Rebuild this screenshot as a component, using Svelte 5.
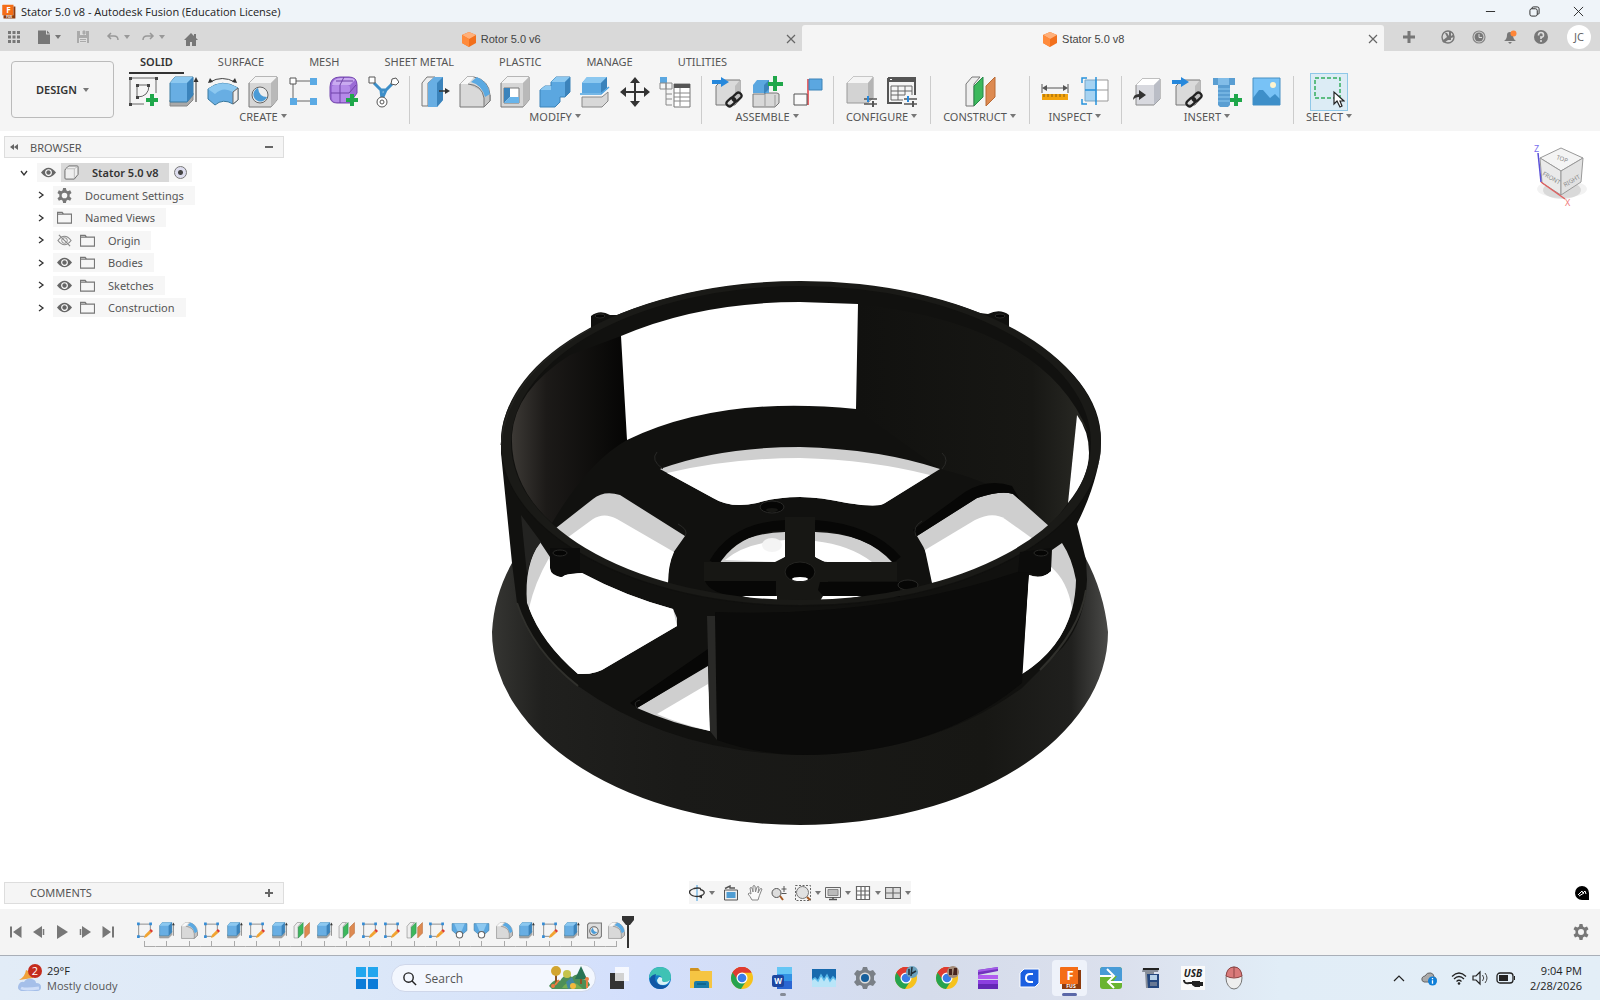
<script lang="ts">
  // Modelling workspace: window chrome, ribbon, browser tree, viewport,
  // timeline and the desktop taskbar underneath.

  type Group = { label: string; tools: string[] }
  type TreeRow = { label: string; icon: string; eye?: 'eye' | 'hidden' }

  const ribbonTabs = ['SOLID', 'SURFACE', 'MESH', 'SHEET METAL', 'PLASTIC', 'MANAGE', 'UTILITIES']

  const groups: Group[] = [
    { label: 'CREATE', tools: ['sketch', 'extrude', 'revolve', 'hole', 'pattern', 'form', 'automate'] },
    { label: 'MODIFY', tools: ['presspull', 'fillet', 'shell', 'combine', 'split', 'move', 'parameters'] },
    { label: 'ASSEMBLE', tools: ['link', 'component', 'joint'] },
    { label: 'CONFIGURE', tools: ['configure', 'configTable'] },
    { label: 'CONSTRUCT', tools: ['plane'] },
    { label: 'INSPECT', tools: ['measure', 'section'] },
    { label: 'INSERT', tools: ['derive', 'link', 'bolt', 'canvas'] },
    { label: 'SELECT', tools: ['select'] },
  ]

  const tree: TreeRow[] = [
    { label: 'Document Settings', icon: 'gear' },
    { label: 'Named Views', icon: 'folder' },
    { label: 'Origin', icon: 'folder', eye: 'hidden' },
    { label: 'Bodies', icon: 'folder', eye: 'eye' },
    { label: 'Sketches', icon: 'folder', eye: 'eye' },
    { label: 'Construction', icon: 'folder', eye: 'eye' },
  ]

  const navTools = [
    { name: 'orbit', menu: true },
    { name: 'lookAt', menu: false },
    { name: 'pan', menu: false },
    { name: 'zoom', menu: false },
    { name: 'fit', menu: true },
    { name: 'display', menu: true },
    { name: 'grid', menu: true },
    { name: 'viewports', menu: true },
  ]

  const playback = ['first', 'back', 'play', 'forward', 'last']

  const features = [
    'edit', 'extrude', 'fillet', 'edit', 'extrude', 'edit', 'extrude', 'plane', 'extrude', 'plane', 'edit',
    'edit', 'plane', 'edit', 'loft', 'loft', 'fillet', 'extrude', 'edit', 'extrude', 'bore', 'fillet',
  ]

  const apps = [
    'edge', 'explorer', 'chrome', 'word', 'monitor', 'settings', 'chromeBlue', 'chromeBrown',
    'clip', 'cura', 'fusion', 'camtasia', 'scanner', 'usb', 'mouse',
  ]

  let activeTab = $state('SOLID')

  const plus = '<path d="M25 18v12M19 24h12" stroke="#1fa74a" stroke-width="4"/>'
  const cube =
    '<path d="M2 7 8 1h22v23l-6 7H2z" fill="#d6d6d6" stroke="#777"/><path d="M2 7 8 1h22l-6 6z" fill="#f3f3f3"/><path d="M24 7l6-6v23l-6 7z" fill="#b9b9b9"/>'
  const chain =
    '<g fill="none" stroke="#222" stroke-width="2.2"><rect x="15" y="23" width="10" height="6" rx="3" transform="rotate(-42 20 26)"/><rect x="21" y="18" width="10" height="6" rx="3" transform="rotate(-42 26 21)"/></g>'
  const sliders =
    '<path d="M18 23h13M18 28h13" stroke="#555" stroke-width="1.6"/><path d="M22 20v6" stroke="#2688dc" stroke-width="2"/><path d="M27 25v6" stroke="#555" stroke-width="2"/>'
  const chromeBody =
    '<circle cx="12" cy="12" r="11" fill="#f6c21c"/><path d="M12 12 2.500 6.500A11 11 0 0 1 21.500 6.500H12z" fill="#df3b31"/><path d="M2.500 6.500A11 11 0 0 0 11 23l5.500-8.500L12 12z" fill="#26a34f"/><path d="M2.500 6.500A11 11 0 0 1 21.500 6.500H12L8 14z" fill="#df3b31"/><circle cx="12" cy="12" r="5.500" fill="#fff"/><circle cx="12" cy="12" r="4.300" fill="#3a7de8"/>'

  // 32-unit drawings, shared by the ribbon and the timeline.
  const tools: Record<string, string> = {
    sketch: `<path d="M3 2h26v15M3 2v26h14M10 9h12M10 9v12M22 9q0 12-12 12" fill="none" stroke="#666"/><g fill="#444"><path d="M2 1h3v3H2zM28 1h3v3h-3zM2 27h3v3H2zM9 8h3v3H9zM20 8h3v3h-3zM9 20h3v3H9z"/></g>${plus}`,
    extrude:
      '<path d="M3 24h17l6-7v7l-6 6H3z" fill="#a9a9a9" stroke="#888"/><path d="M3 7 8 1h18v18l-6 7H3z" fill="#68aee3" stroke="#39799f"/><path d="M3 7 8 1h18l-6 6z" fill="#8cc8f0"/><path d="M20 7l6-6v18l-6 7z" fill="#3b83bb"/><path d="M29 26V4" stroke="#333"/><path d="M26.500 6 29 1l2.500 5z" fill="#333"/>',
    revolve:
      '<path d="M3 6Q15-1 28 6" fill="none" stroke="#444"/><path d="M1 7l2-5 3 4zM30 7l-2-5-3 4z" fill="#333"/><path d="M1 13Q15 2 31 12v12l-5 4q-10-6-18 1L1 23z" fill="#68aee3" stroke="#39799f"/><path d="M1 13Q15 2 31 12l-5 4Q16 10 8 18z" fill="#8cc8f0"/><path d="M26 16l5-4v12l-5 4z" fill="#eee" stroke="#666"/>',
    hole: `${cube}<circle cx="13" cy="19" r="8" fill="#eee" stroke="#666"/><path d="M11 12a7 7 0 1 0 9 9q-8 0-9-9z" fill="#4b9bd6"/>`,
    bore: '<path d="M3 5l3-3h23v25l-3 3H3z" fill="#ddd" stroke="#777" stroke-width="2"/><circle cx="15" cy="17" r="8" fill="#eee" stroke="#666" stroke-width="2"/><path d="M13 11a6 6 0 1 0 8 8q-7 0-8-8z" fill="#4b9bd6"/>',
    pattern:
      '<path d="M9 5h14M6 8v14M9 25h14" stroke="#666"/><path d="M3 2h6v6H3z" fill="#fff" stroke="#555"/><path d="M23 2h7v7h-7zM3 22h7v7H3zM23 22h7v7h-7z" fill="#5baae4"/>',
    form: `<path d="M3 11Q3 1 13 1h9q8 0 8 8v8l-7 10H10q-7 0-7-7z" fill="#9b6bd6" stroke="#7548ae"/><path d="M5 9Q6 2 14 2h8q5 0 6 2l-5 5z" fill="#c9aaf0"/><path d="M5 11q0-2 3-2h12q3 0 3 3v11q0 3-3 3H9q-4 0-4-4z" fill="#b48ae8"/><path d="M4 17h18l7-8M13 9v18M9 5h17M17 1l-4 8" stroke="#6f43a6" fill="none"/>${plus}`,
    automate:
      '<path d="M7 7l7 7h5l6-6M14 14l1 9 4-9" fill="none" stroke="#3c8ec8" stroke-width="3"/><path d="M2 1h6v6H2z" fill="#fff" stroke="#555"/><path d="M24 8l1-5 4-1 3 4-3 3z" fill="#fff" stroke="#555"/><circle cx="15" cy="26" r="5" fill="#fff" stroke="#555"/><circle cx="15" cy="26" r="2" fill="none" stroke="#555"/>',
    presspull:
      '<path d="M3 7 8 1h8L9 7v23H3z" fill="#eee" stroke="#777"/><path d="M9 7l6-6h9v23l-6 7H9z" fill="#68aee3"/><path d="M18 7l6-6v23l-6 7z" fill="#3b83bb"/><path d="M20 15h7" stroke="#333" stroke-width="1.500"/><path d="M26 12l5 3-5 3z" fill="#333"/>',
    fillet:
      '<path d="M1 8 8 1h7q15 3 16 18v6l-6 6H1z" fill="#d9d9d9" stroke="#777"/><path d="M1 8 8 1h7L9 8z" fill="#f8f8f8"/><path d="M9 8q14 1 16 14v9l6-6v-6" fill="#c4c4c4" stroke="#777"/><path d="M12 6l6-5q11 5 13 17l-5 3Q23 9 12 6z" fill="#5aa9e2"/>',
    shell: `${cube}<path d="M5 12h15v15H5z" fill="#fff" stroke="#777"/><path d="M5 12h6v9l-6 6z" fill="#3b83bb"/><path d="M5 27l6-6h9v6z" fill="#68b4ea"/>`,
    combine:
      '<path d="M1 14l5-4h6V6l5-5h14v15l-5 5h-5v5l-5 5H1z" fill="#5ba7e0" stroke="#3c83b8"/><path d="M12 6l5-5h14l-5 5zM1 14l5-4h6v4z" fill="#8cc8f0"/><path d="M26 6l5-5v15l-5 5z" fill="#3b83bb"/>',
    split:
      '<path d="M3 7 8 1h20v11l-6 5H3z" fill="#5ba7e0"/><path d="M3 7 8 1h20l-6 6z" fill="#8cc8f0"/><path d="M22 7l6-6v11l-6 5z" fill="#3b83bb"/><path d="M1 18h21l8-7" fill="none" stroke="#4ba2e1" stroke-width="1.500"/><path d="M3 21h20l6-5v9l-6 6H3z" fill="#d8d8d8" stroke="#888"/>',
    move: '<path d="M16 4v24M4 16h24" stroke="#333" stroke-width="2"/><path d="M11 7l5-6 5 6zM11 25l5 6 5-6zM7 11l-6 5 6 5zM25 11l6 5-6 5z" fill="#333"/>',
    parameters:
      '<path d="M1 1h7v6H1z" fill="#5ba7e0"/><path d="M1 7h6v6H1zM7 7h6v6H7zM7 13v16h6M7 18h6M7 23h6" fill="none" stroke="#888"/><path d="M15 8h16v23H15z" fill="#fff" stroke="#777"/><path d="M15 8h16v4H15z" fill="#555"/><path d="M15 17h16M15 21h16M15 25h16M21 12v18" stroke="#888"/>',
    link: `<path d="M5 10 11 4h18v19l-5 6H5z" fill="#dadada" stroke="#777"/><path d="M24 10l5-6v19l-5 5z" fill="#bdbdbd"/><path d="M1 4h9V1l8 5-8 5V8H1z" fill="#2688dc"/>${chain}`,
    component:
      '<path d="M2 18h12V17h12l2 1v9l-4 4H2z" fill="#d8d8d8" stroke="#777"/><path d="M14 18v12M24 19v12" stroke="#999"/><path d="M2 9 6 4h12v13H2z" fill="#5ba7e0"/><path d="M13 9l5-5v9l-5 5z" fill="#3b83bb"/><path d="M24 0v15M17 8h15" stroke="#1fa74a" stroke-width="4"/>',
    joint: '<path d="M17 3v26" stroke="#e0393e" stroke-width="1.500"/><path d="M18 3h13v11H18z" fill="#5ba7e0" stroke="#3c83b8"/><path d="M3 18h13v11H3z" fill="#fafafa" stroke="#555"/>',
    configure: `<path d="M1 7 7 1h20v21l-5 5H1z" fill="#d3d3d3" stroke="#999"/><path d="M1 7 7 1h20l-5 6z" fill="#f4f4f4"/><path d="M22 7l5-6v21l-5 5z" fill="#b4b4b4"/>${sliders}`,
    configTable: `<path d="M2 2h27v17M2 2v25h14" fill="none" stroke="#555" stroke-width="2"/><path d="M2 1h28v5H2z" fill="#555"/><path d="M5 10h21v9M5 10v14h12M5 15h21M5 19h14M12 10v14M19 10v9" fill="none" stroke="#666"/><path d="M4 3h2v1H4z" fill="#fff"/>${sliders}`,
    plane:
      '<path d="M2 8 8 1h8l-6 7v22H2z" fill="#eee" stroke="#777"/><path d="M10 10l9-9v20l-9 9z" fill="#3cb85c" stroke="#278848"/><path d="M22 10l9-9v20l-9 9z" fill="#dd8a51" stroke="#b96a35"/>',
    measure:
      '<path d="M3 8v9M29 8v9M5 12h22" stroke="#555"/><path d="M3 12l5-3v6zM29 12l-5-3v6z" fill="#555"/><path d="M3 18h26v6H3z" fill="#f3a30d"/><path d="M5 18v3M9 18v3M13 18v3M17 18v3M21 18v3M25 18v3" stroke="#875c10"/>',
    section:
      '<path d="M16 4h13v21H16M16 14h13" fill="#fff" stroke="#999"/><path d="M6 4h11v21H6z" fill="#a6d3f2" stroke="#7ba6c5"/><path d="M6 14h11M17 1v28M8 2H3v5M3 23v5h5" fill="none" stroke="#2792dc" stroke-width="1.500"/>',
    derive:
      '<path d="M5 9 11 3h18v20l-6 6H5z" fill="#d8d9df" stroke="#888"/><path d="M5 9l6-6h18l-6 6z" fill="#fff"/><path d="M23 9l6-6v20l-6 6z" fill="#babdc6"/><path d="M2 24q0-6 6-6v-4l7 5-7 5v-3q-4 0-6 3z" fill="#333"/>',
    bolt: `<path d="M2 2h22v7H2z" fill="#5a9ed2"/><path d="M7 2h11v7H7z" fill="#82bde8"/><path d="M7 9h12v20l-2 2H9l-2-2z" fill="#5a9ed2"/><path d="M7 13h12M7 17h12M7 21h12M7 25h12" stroke="#8cc8f0"/>${plus}`,
    canvas:
      '<path d="M2 2h27v27H2z" fill="#78c2f6" stroke="#4690c3"/><path d="M2 22l6-8h4l7 8 5-4 5 5v6H2z" fill="#3e8fc9"/><circle cx="22" cy="9" r="3" fill="#fff4cf"/>',
    select:
      '<path d="M2 2h25v20H2z" fill="none" stroke="#34ad5d" stroke-width="1.500" stroke-dasharray="4 2"/><path d="M21 16v12l3-3 3 6 2-1-2-5h4z" fill="#fff" stroke="#222" stroke-width="1.200"/>',
    edit: '<path d="M5 4h22v12M5 4v23h12" fill="none" stroke="#777" stroke-width="1.500"/><path d="M2 1h5v5H2zM25 1h5v5h-5zM2 25h5v5H2z" fill="#338bd5"/><path d="M15 30l2-6 8-8 4 4-9 8z" fill="#f2a431"/><path d="M25 16l3-3 4 4-3 3z" fill="#dc3e31"/>',
    loft: '<path d="M2 3h28v13l-7 6H9l-7-6z" fill="#5ba7e0" stroke="#39799f"/><path d="M6 3h20l-6 14h-8z" fill="#8cc8f0"/><circle cx="16" cy="24" r="6" fill="#fff" stroke="#666" stroke-width="2"/>',
  }

  // 16-unit glyphs.
  const glyphs: Record<string, string> = {
    gear: '<path d="M6.500 0h3l.5 2.500 1.500 1 2.500-1 1.500 2.700-2 1.600v2.400l2 1.600-1.500 2.700-2.500-1-1.500 1-.5 2.500h-3L6 13.500l-1.500-1-2.500 1L.5 10.800l2-1.600V6.800l-2-1.600L2 2.500l2.500 1L6 2.500zM8 5a3 3 0 1 0 0 6 3 3 0 0 0 0-6z" fill="#777" fill-rule="evenodd"/>',
    folder: '<path d="M.5 14V2.500h5l1.500 2h8.500V14zM.5 4.500H7" fill="none" stroke="#777" stroke-width="1.300"/>',
    eye: '<path d="M0 8q8-10 16 0-8 10-16 0z" fill="#666"/><circle cx="8" cy="8" r="3" fill="none" stroke="#fff" stroke-width="1.200"/>',
    hidden: '<path d="M1 8q7-9 14 0-7 9-14 0zM2 2l12 12" fill="none" stroke="#888" stroke-width="1.200"/><circle cx="8" cy="8" r="3" fill="none" stroke="#888"/>',
    body: '<path d="M1 6q0-2 2-3l2-2h9q1 0 1 1v8l-4 5H2q-1 0-1-1z" fill="#eee" stroke="#666"/><path d="M3 4h8l3-2M11 4v10" stroke="#bbb" fill="none"/>',
    apps: '<path d="M2 2h3v3H2zM6.500 2h3v3h-3zM11 2h3v3h-3zM2 6.500h3v3H2zM6.500 6.500h3v3h-3zM11 6.500h3v3h-3zM2 11h3v3H2zM6.500 11h3v3h-3zM11 11h3v3h-3z" fill="#777"/>',
    file: '<path d="M2 1.500h8v4h4V15H2zM11 1.500l3 3h-3z" fill="#777"/>',
    save: '<path d="M2 2h12v12H2z" fill="#aaa"/><path d="M5 2h6v4H5zM4 9h8v5H4z" fill="#ddd"/><path d="M8 2h2v3H8zM5 10.500h6M5 12.500h6" fill="#aaa" stroke="#aaa"/>',
    undo: '<path d="M6 4 3 7l3 3M3 7h6q4 0 4 4" fill="none" stroke="#999" stroke-width="1.500"/>',
    redo: '<path d="M10 4l3 3-3 3M13 7H7q-4 0-4 4" fill="none" stroke="#999" stroke-width="1.500"/>',
    home: '<path d="M8 2 1 9h2v6h4v-4h2v4h4V9h2l-2-2V3h-2v2z" fill="#777"/>',
    add: '<path d="M8 2v12M2 8h12" stroke="#777" stroke-width="3"/>',
    extensions: '<circle cx="8" cy="8" r="6" fill="none" stroke="#777" stroke-width="1.400"/><path d="M2 12l5-4-2-4h2l2 3V3h2v4l3-2v3l-3 1v2H8l-4 3z" fill="#777"/>',
    clock: '<circle cx="8" cy="8" r="6" fill="none" stroke="#888" stroke-width="1.200"/><circle cx="8" cy="8" r="4.500" fill="#777"/><path d="M8 5v3.500h3" fill="none" stroke="#ddd"/>',
    bell: '<path d="M2 12q3-2 3-6 0-3 3-3t3 3q0 4 3 6zM6 13h4l-2 2z" fill="#777"/><circle cx="11.500" cy="4.500" r="3" fill="#ff8638"/>',
    help: '<circle cx="8" cy="8" r="7" fill="#777"/><path d="M5.500 6.500q0-3 2.500-3t2.500 2.500-2.500 2V10M8 11v2" stroke="#ddd" stroke-width="1.600" fill="none"/>',
    close: '<path d="M4 4l8 8M12 4l-8 8" stroke="#666" stroke-width="1.200"/>',
    document: '<path d="M8 1l7 3v8l-7 4-7-4V4z" fill="#f2701d"/><path d="M8 1l7 3-7 4-7-4z" fill="#ffb07a"/><path d="M1 4l7 4v8l-7-4z" fill="#ff8b3c"/>',
    first: '<path d="M3 2.500v11" stroke="#777" stroke-width="2"/><path d="M13.500 2v12L5 8z" fill="#777"/>',
    back: '<path d="M11 2v12L2 8z" fill="#777"/><path d="M12.500 5v6" stroke="#777" stroke-width="1.500"/>',
    play: '<path d="M3 1l11 7-11 7z" fill="#777"/>',
    forward: '<path d="M5 2v12l9-6z" fill="#777"/><path d="M3.500 5v6" stroke="#777" stroke-width="1.500"/>',
    last: '<path d="M13 2.500v11" stroke="#777" stroke-width="2"/><path d="M2.500 2v12L11 8z" fill="#777"/>',
    orbit: '<path d="M8 0v16" stroke="#3e9bdd"/><path d="M11 4.500q5 1 4 4-2 3-7 3t-7-3 4-5q4-1 7 0" fill="none" stroke="#333" stroke-width="1.300"/><path d="M9 11.500l4-2v4z" fill="#333"/>',
    lookAt: '<path d="M1.500 5h13v10h-13z" fill="#eee" stroke="#555"/><path d="M3.500 7h9v6h-9z" fill="#4f9dd3"/><path d="M2 3.500 7 1v2h5" fill="none" stroke="#555" stroke-width="1.400"/>',
    pan: '<path d="M5 15Q3 11 1 9q1-2 3 0L3 3q1-1 2 0l1 4V1q1-1 2 0l.5 6L10 2q1-1 2 0l-1 6 2-4q1-1 2 0-3 7-4 11z" fill="#fafafa" stroke="#888"/>',
    zoom: '<circle cx="5.500" cy="8" r="4.500" fill="#ddd" stroke="#555"/><path d="M9 11l3 4" stroke="#a65a24" stroke-width="2"/><path d="M13 1v6M10.500 4h5M10.500 8.500h5" stroke="#555"/>',
    fit: '<path d="M.5.5h15v15H.5z" fill="none" stroke="#666" stroke-dasharray="2 1.500"/><circle cx="7.500" cy="7.500" r="6" fill="#e1e1e1" stroke="#777"/><path d="M12 12l3 3" stroke="#a65a24" stroke-width="2"/>',
    display: '<path d="M.5 2.500h15v10H.5z" fill="#eee" stroke="#666"/><path d="M3 4.500h10v6H3z" fill="#bbb" stroke="#888"/><path d="M4 14.500h8M8 12v2" stroke="#555" stroke-width="1.500"/>',
    grid: '<path d="M1.500 1.500h13v13h-13zM1.500 6h13M1.500 10h13M6 1.500v13M10 1.500v13" fill="#fff" stroke="#666" stroke-width="1.200"/>',
    viewports: '<path d="M.5 2.500h15v11H.5zM8 2.500v11M.5 8h15" fill="#ddd" stroke="#666" stroke-width="1.200"/>',
    chevronUp: '<path d="M3 11l5-5 5 5" fill="none" stroke="#222" stroke-width="1.200"/>',
    cloud: '<path d="M3 12q-3-1-2-4 1-2 3-2 2-4 6-3 3 1 3 4 3 1 2 3l-2 2z" fill="#aaa" stroke="#666"/><circle cx="11.500" cy="11" r="4.500" fill="#0f7fd8"/><path d="M11.500 8v1.300M11.500 10.300v3.500" stroke="#fff" stroke-width="1.300"/>',
    wifi: '<path d="M1 6.500q7-7 14 0M3 9q5-5 10 0M5.500 11.500q2.500-2.500 5 0" fill="none" stroke="#222" stroke-width="1.200"/><circle cx="8" cy="13.500" r="1.300" fill="#222"/>',
    speaker: '<path d="M1 6h3l4-4v12l-4-4H1z" fill="none" stroke="#222" stroke-width="1.200"/><path d="M10.500 5q2.500 3 0 6M13 3q4 5 0 10" fill="none" stroke="#444"/>',
  }

  // 24-unit taskbar tiles.
  const appIcons: Record<string, string> = {
    edge: '<circle cx="12" cy="12" r="11" fill="#167fc9"/><path d="M1 12Q2 1 13 1q10 1 10 10 0 5-6 5-4 0-3-3Q13 6 1 12z" fill="#3fc2b4"/><path d="M2 16Q1 9 8 8q-3 8 4 11 5 2 9-1-3 5-9 5-7 0-10-7z" fill="#1157a5"/><path d="M11 11q4 0 3 3 0 2 3 2 3 0 5-2-2 5-7 5-6 0-6-5z" fill="#d8f2f7"/>',
    explorer: '<path d="M1 3q0-1 1-1h7l3 3h11v17H1z" fill="#f5c543"/><path d="M1 3q0-1 1-1h7l2 3H1z" fill="#cf9220"/><path d="M5 17q0-2 2-2h11q2 0 2 2v5H5z" fill="#1b7ba8"/><path d="M8 18h9" stroke="#075274"/>',
    chrome: chromeBody,
    chromeBlue: `${chromeBody}<circle cx="18" cy="6" r="6" fill="#6ba1bd"/><path d="M15 3v6M18 1l-1 9M22 5l-5 3" stroke="#22313b" stroke-width="1.500"/>`,
    chromeBrown: `${chromeBody}<circle cx="18" cy="6" r="6" fill="#a38b78"/><path d="M14 3h3v6h-3zM19 2h3v7h-4z" fill="#47251f"/>`,
    word: '<path d="M6 1h15v22H6z" fill="#2b66d2"/><path d="M6 1h15v7H6z" fill="#65c6f5"/><path d="M6 8h15v7H6z" fill="#3293e5"/><rect x="1" y="9" width="12" height="12" rx="2" fill="#1d46a0"/><text x="7" y="18" font-family="Open Sans, sans-serif" font-size="8" font-weight="700" text-anchor="middle" fill="#fff">W</text>',
    monitor: '<path d="M0 3h24v18H0z" fill="#b8e5f8"/><path d="M0 3h24v11l-3-3-3 4-3-6-3 5-3-5-3 6-3-3-3 2z" fill="#1769ae"/><path d="M0 14l3-2 3 3 3-6 3 5 3-5 3 6 3-4 3 3" fill="none" stroke="#59b9ea" stroke-width="1.500"/>',
    settings: '<path d="M10 1h4l1 3 2 1 3-1 3 4-2 2v4l2 2-3 4-3-1-2 1-1 3h-4l-1-3-2-1-3 1-3-4 2-2v-4L1 8l3-4 3 1 2-1z" fill="#7a8087"/><circle cx="12" cy="12" r="5.500" fill="#ddd"/><circle cx="12" cy="12" r="4" fill="#17609d"/>',
    clip: '<path d="M2 4l20-3v4L2 9z" fill="#7133bd"/><path d="M2 9h20v4H2z" fill="#b15df0"/><path d="M2 14h20v4H2z" fill="#8c3fe0"/><path d="M2 18h20v5H2z" fill="#6428b6"/><path d="M2 4l20-3v2L2 6z" fill="#a35be8"/>',
    cura: '<path d="M3 7l4-4h15v14l-4 4H3z" fill="#1b5fe0" stroke="#fff"/><path d="M16 8h-3q-4 0-4 4t4 4h3" fill="none" stroke="#fff" stroke-width="2"/>',
    fusion: '<path d="M2 2q0-1 1-1h17v17H2z" fill="#f46d17"/><path d="M20 4h3v19H4v-5h16z" fill="#8d3b0e"/><text x="12" y="14" font-family="Open Sans, sans-serif" font-size="13" font-weight="700" text-anchor="middle" fill="#fff">F</text><text x="13" y="22" font-family="Open Sans, sans-serif" font-size="5" font-weight="700" text-anchor="middle" fill="#fff">FUS</text>',
    camtasia: '<rect x="1" y="1" width="22" height="22" rx="3" fill="#69b431"/><path d="M1 10V4q0-3 3-3h16q3 0 3 3v12h-9l4-6z" fill="#489bd7"/><path d="M1 10h12M11 16h12M8 3l7 7-6 6 6 6" fill="none" stroke="#fff" stroke-width="2"/>',
    scanner: '<path d="M3 2h16l-1 4h-4v16H6L5 6H2z" fill="#888f9a"/><path d="M3 2h16v2H3z" fill="#222"/><path d="M7 8h12v14H8z" fill="#24477e"/><path d="M10 9h7v5h-7z" fill="#b7d1e8"/><path d="M10 17h7M10 19h7" stroke="#aaa"/>',
    usb: '<path d="M0 0h24v24H0z" fill="#fafafa"/><text x="12" y="11" font-family="Open Sans, sans-serif" font-size="10" font-style="italic" font-weight="700" text-anchor="middle" fill="#222">USB</text><path d="M3 14q0 4 5 3h4" fill="none" stroke="#222" stroke-width="2"/><path d="M11 15h8v6h-5l-3-2zM19 16h3v4h-3z" fill="#222"/>',
    mouse: '<ellipse cx="12" cy="12" rx="8" ry="11" fill="#eee" stroke="#777"/><path d="M4 10q1-9 8-9t8 9q-8 4-16 0z" fill="#d97a7a" stroke="#8d4545"/><path d="M12 1v10" stroke="#8d4545"/>',
  }
</script>

{#snippet tool(name: string)}
  <svg class="tool-art" viewBox="0 0 32 32" aria-hidden="true">{@html tools[name]}</svg>
{/snippet}

{#snippet glyph(name: string)}
  <svg class="glyph" viewBox="0 0 16 16" aria-hidden="true">{@html glyphs[name]}</svg>
{/snippet}

{#snippet caret()}
  <svg class="caret" viewBox="0 0 6 4" aria-hidden="true"><path d="M0 0h6L3 4z" fill="currentColor" /></svg>
{/snippet}

<div class="desktop">
  <header class="titlebar">
    <svg class="app-logo" viewBox="0 0 24 24" aria-hidden="true">{@html appIcons.fusion}</svg>
    <span>Stator 5.0 v8 - Autodesk Fusion (Education License)</span>
    <div class="window-buttons">
      <button aria-label="Minimize"><svg viewBox="0 0 12 12"><path d="M1 6h10" /></svg></button>
      <button aria-label="Restore"><svg viewBox="0 0 12 12"><rect x="1" y="3" width="8" height="8" rx="2" /><path d="M3 3q0-2 2-2h4q2 0 2 2v5q0 1-2 1" /></svg></button>
      <button aria-label="Close"><svg viewBox="0 0 12 12"><path d="M1 1l10 10M11 1L1 11" /></svg></button>
    </div>
  </header>

  <div class="tabbar">
    <div class="quick">
      <button aria-label="Data panel">{@render glyph('apps')}</button>
      <button aria-label="File" class="with-menu">{@render glyph('file')}{@render caret()}</button>
      <button aria-label="Save">{@render glyph('save')}</button>
      <button aria-label="Undo" class="with-menu faded">{@render glyph('undo')}{@render caret()}</button>
      <button aria-label="Redo" class="with-menu faded">{@render glyph('redo')}{@render caret()}</button>
      <button aria-label="Home" class="home">{@render glyph('home')}</button>
    </div>
    <div class="doc-tab">
      <button class="doc-name">{@render glyph('document')}Rotor 5.0 v6</button>
      <button aria-label="Close Rotor">{@render glyph('close')}</button>
    </div>
    <div class="doc-tab current">
      <button class="doc-name">{@render glyph('document')}Stator 5.0 v8</button>
      <button aria-label="Close Stator">{@render glyph('close')}</button>
    </div>
    <div class="account">
      <button aria-label="New design">{@render glyph('add')}</button>
      <button aria-label="Extensions">{@render glyph('extensions')}</button>
      <button aria-label="Job status">{@render glyph('clock')}</button>
      <button aria-label="Notifications">{@render glyph('bell')}</button>
      <button aria-label="Help">{@render glyph('help')}</button>
      <button class="avatar">JC</button>
    </div>
  </div>

  <div class="ribbon">
    <button class="workspace">DESIGN {@render caret()}</button>
    <div class="ribbon-body">
      <nav class="ribbon-tabs">
        {#each ribbonTabs as tab}
          <button class:active={tab === activeTab} onclick={() => (activeTab = tab)}>{tab}</button>
        {/each}
      </nav>
      <div class="groups">
        {#each groups as group}
          <section class="group">
            <div class="tools">
              {#each group.tools as name}
                <button class="tool" class:picked={name === 'select'} aria-label={name}>{@render tool(name)}</button>
              {/each}
            </div>
            <button class="group-label">{group.label}{@render caret()}</button>
          </section>
        {/each}
      </div>
    </div>
  </div>

  <main class="viewport">
    <svg class="model" viewBox="0 131 1600 778" role="img" aria-label="Stator model">
      <defs>
        <linearGradient id="cone" x1="493" x2="1108" y1="0" y2="0" gradientUnits="userSpaceOnUse">
          <stop offset="0" stop-color="#353532" />
          <stop offset=".08" stop-color="#20201e" />
          <stop offset=".3" stop-color="#1a1a18" />
          <stop offset=".8" stop-color="#171714" />
          <stop offset=".94" stop-color="#20201e" />
          <stop offset="1" stop-color="#4a4a48" />
        </linearGradient>
        <linearGradient id="leftWall" x1="512" x2="627" y1="0" y2="0" gradientUnits="userSpaceOnUse">
          <stop offset="0" stop-color="#3c3935" />
          <stop offset=".3" stop-color="#1c1a18" />
          <stop offset="1" stop-color="#050504" />
        </linearGradient>
        <linearGradient id="rightWall" x1="858" x2="1090" y1="0" y2="0" gradientUnits="userSpaceOnUse">
          <stop offset="0" stop-color="#11110f" />
          <stop offset=".75" stop-color="#171714" />
          <stop offset="1" stop-color="#2b2b26" />
        </linearGradient>
      </defs>

      <!-- flared base -->
      <path fill="url(#cone)" d="M512 563Q494 595 492 632A308 193 0 0 0 1108 632Q1104 592 1085 557L1040 480H520z" />
      <!-- upper drum -->
      <path fill="#11110f" d="M501 453V437Q504 380 591 330V316Q600 309 610 315L617 315Q700 282 800 282 900 282 980 313L988 314Q1000 308 1009 315V327Q1101 377 1101 440 1100 478 1077 524L1086 560 1087 580Q1085 620 1063 647L1022 688Q930 755 800 755 670 752 578 686 530 650 517 603L512 563 503 473z" />
      <path fill="url(#leftWall)" d="M512 435Q515 390 570 355L621 336 627 440Q588 462 552 523 510 485 512 435z" />
      <path fill="url(#rightWall)" d="M858 304Q1045 325 1088 432L1077 415 1068 503 1050 527Q1010 485 940 469L856 409z" />

      <!-- openings -->
      <g fill="#fff">
        <path d="M621 336Q700 302 800 302L858 304 856 409Q720 395 627 440z" />
        <path d="M1077 415Q1089 431 1089 453 1089 477 1068 503z" />
      </g>
      <g fill="#cfcfcf">
        <path d="M660 469Q720 447 800 447 880 449 940 469L885 503Q879 508 847 503 820 497 800 497 776 497 757 503 731 509 713 498z" />
        <path d="M556 528 593 499Q604 490 620 495L685 536 673 553Q668 565 668 583 610 575 556 528z" />
        <path d="M1050 527 1013 494Q1001 490 977 498L917 536Q933 560 932 583 1006 570 1050 527z" />
        <path d="M540 542Q524 565 527 603 541 642 578 674 596 675 607 667L677 626V618L673 609Q625 596 582 573 564 574 561 577 551 576 550 557z" />
        <path d="M708 665 710 731Q673 724 637 708z" />
        <path d="M1029 575 1022 674Q1075 640 1076 580 1072 558 1062 543L1052 550 1051 571Q1042 580 1029 575z" />
        <path d="M715 562Q738 533 785 532V557L777 562zM815 532Q865 533 895 562H825L815 557z" />
      </g>
      <g fill="#fff">
        <path d="M667 473Q730 458 800 458 872 460 930 475L885 503Q879 508 847 503 820 497 800 497 776 497 757 503 731 509 713 498z" />
        <path d="M567 538 593 519Q604 512 617 519L674 552Q668 565 668 583 610 575 567 538z" />
        <path d="M925 550 975 520Q993 511 1005 519L1033 539Q985 575 932 583z" />
        <path d="M549 558Q535 582 529 608 541 642 578 674 596 675 607 667L677 626 673 609Q625 596 582 573 564 574 561 577 553 576 549 558z" />
        <path d="M708 684 710 731Q680 724 657 714z" />
        <path d="M1029 575 1022 674Q1062 649 1072 608 1067 580 1051 567V571Q1042 580 1029 575z" />
        <path d="M725 560Q745 543 785 540V557L777 562zM815 541Q850 545 872 562H825L815 557z" />
      </g>
      <ellipse cx="772" cy="545" rx="10" ry="7" fill="#f4f4f4" />

      <!-- spokes, hub and their thickness -->
      <path fill="#070706" d="M630 703 708 649V666L637 708zM913 530 965 492Q988 478 1012 486L1020 500 1013 494Q1001 490 977 498L917 536z" />
      <path fill="none" stroke="#070706" stroke-width="10" d="M714 563Q735 527 786 525M815 525Q870 529 897 560" />
      <path fill="none" stroke="#292927" d="M657 452Q650 460 663 469M942 453Q950 460 942 469M678 524Q689 530 685 536M922 521Q912 527 916 536M640 700Q632 702 637 708" />
      <path fill="#171714" d="M785 517H815V557Q820 562 828 562H897V581H828V602H774V581H704V562H775L785 557z" />
      <path fill="#070706" d="M705 581H776V597H740Q710 594 705 581zM820 582H900V597H824L818 590z" />
      <path fill="#fff" d="M742 596H777V601L758 600zM823 596H862L835 601H820z" />
      <ellipse cx="800" cy="572" rx="15" ry="10" fill="#050504" stroke="#252522" />
      <ellipse cx="800" cy="579" rx="8" ry="2" fill="#fff" />
      <ellipse cx="772" cy="507" rx="12" ry="6" fill="#060605" stroke="#292927" />
      <ellipse cx="772" cy="510" rx="6" ry="2" fill="#171714" />
      <ellipse cx="908" cy="585" rx="10" ry="5" fill="#060605" stroke="#292927" />

      <!-- front wall -->
      <path fill="#0b0b0a" d="M715 612Q890 618 1029 568L1022 683Q935 755 800 755 757 754 717 740z" />
      <path fill="#292927" d="M707 616 715 616 717 740 710 731z" />
      <!-- upper ring: front face, then top face -->
      <path fill="#0f0f0d" d="M501 444A300 162 0 0 0 1101 444L1099 463A300 162 0 0 1 503 463z" />
      <path fill="#1a1a17" fill-rule="evenodd" d="M501 443A300 162 0 0 1 1101 443 300 162 0 0 1 501 443zM511 443A290 157 0 0 0 1091 443 290 157 0 0 0 511 443z" />
      <path fill="none" stroke="#262623" d="M501 445Q506 375 590 329" />
      <path fill="#0c0c0b" d="M550 548H580V573Q568 572 562 577 551 576 550 568zM1020 552 1051 548V571Q1041 580 1031 573L1018 572z" />
      <ellipse cx="560" cy="553" rx="7" ry="3" fill="#050504" stroke="#292927" />
      <ellipse cx="1041" cy="553" rx="7" ry="3" fill="#050504" stroke="#292927" />
      <ellipse cx="600" cy="316" rx="5" ry="2" fill="#050504" stroke="#292927" />
      <ellipse cx="1000" cy="316" rx="5" ry="2" fill="#050504" stroke="#292927" />
      <path fill="none" stroke="#30302c" stroke-width="2" d="M517 603Q532 650 578 686M1086 590Q1080 630 1040 670" />
      <path fill="#232321" d="M521 515 541 542Q530 555 527 575z" />
    </svg>

    <div class="view-row">
      <aside class="browser">
        <div class="panel-head">
          <button class="collapse" aria-label="Collapse"><svg viewBox="0 0 8 6"><path d="M4 0v6L0 3zM8 0v6L4 3z" fill="#666" /></svg></button>
          <h2>BROWSER</h2>
          <button class="panel-action" aria-label="Minimize panel"><svg viewBox="0 0 8 8"><path d="M0 4h8" /></svg></button>
        </div>
        <ul class="tree">
          <li class="root">
            <button class="twist" aria-label="Collapse root"><svg viewBox="0 0 8 8"><path d="M1 2l3 4 3-4" /></svg></button>
            <span class="node">
              {@render glyph('eye')}
              <span class="selected">{@render glyph('body')}<span>Stator 5.0 v8</span></span>
              <input type="radio" checked aria-label="Activate Stator 5.0 v8" />
            </span>
          </li>
          {#each tree as row}
            <li>
              <button class="twist" aria-label="Expand {row.label}"><svg viewBox="0 0 8 8"><path d="M2 1l4 3-4 3" /></svg></button>
              <span class="node">
                {#if row.eye}{@render glyph(row.eye)}{/if}
                {@render glyph(row.icon)}
                <span class="node-name">{row.label}</span>
              </span>
            </li>
          {/each}
        </ul>
      </aside>

      <svg class="view-cube" viewBox="0 0 64 74" role="img" aria-label="View cube">
        <ellipse cx="32" cy="49" rx="25" ry="9" fill="#000" opacity=".05" />
        <ellipse cx="32" cy="50" rx="19" ry="9" fill="#000" opacity=".1" />
        <path d="M10 18 31 8l22 10-22 13z" fill="#f4f4f4" stroke="#999" />
        <path d="M10 18 31 31v24L12 43z" fill="#eaeaea" stroke="#999" />
        <path d="M31 31 53 18l-2 24-20 13z" fill="#e2e2e2" stroke="#999" />
        <path d="M8 13l3 29" stroke="#5a50d8" stroke-width="1.500" />
        <path d="M11 42l24 17" stroke="#e06060" stroke-width="1.500" />
        <text x="4" y="12" class="axis-z">Z</text>
        <text x="35" y="66" class="axis-x">X</text>
        <text x="26" y="19" transform="rotate(20 26 19)">TOP</text>
        <text x="12" y="35" transform="rotate(30 12 35)">FRONT</text>
        <text x="35" y="47" transform="rotate(-30 35 47)">RIGHT</text>
      </svg>
    </div>

    <div class="view-row bottom">
      <div class="panel-head comments">
        <h2>COMMENTS</h2>
        <button class="panel-action" aria-label="Expand comments"><svg viewBox="0 0 8 8"><path d="M0 4h8M4 0v8" /></svg></button>
      </div>
      <div class="navbar">
        {#each navTools as item}
          <button class:has-menu={item.menu} aria-label={item.name}>
            {@render glyph(item.name)}
            {#if item.menu}{@render caret()}{/if}
          </button>
        {/each}
      </div>
      <button class="assistant" aria-label="Assistant">
        <svg viewBox="0 0 14 14"><path d="M7 0a7 7 0 0 1 7 7v7H7A7 7 0 0 1 7 0z" /><path d="M3 9l4-4 1 2 2-2 1 3M4 10l5-3" fill="none" stroke="#fff" /></svg>
      </button>
    </div>
  </main>

  <footer class="timeline">
    <div class="playback">
      {#each playback as name}
        <button aria-label={name}>{@render glyph(name)}</button>
      {/each}
    </div>
    <div class="track">
      <ol>
        {#each features as name}
          <li><button aria-label={name}>{@render tool(name)}</button></li>
        {/each}
      </ol>
      <svg class="marker" viewBox="0 0 12 32" aria-hidden="true"><path d="M0 0h12v4L8 9H7v23H5V9H4L0 4z" fill="#333" /></svg>
    </div>
    <button class="timeline-settings" aria-label="Timeline settings">{@render glyph('gear')}</button>
  </footer>

  <div class="taskbar">
    <button class="weather">
      <svg viewBox="0 0 30 30" aria-hidden="true">
        <path d="M3 17q6-3 7-10 6 2 7 8z" fill="#f0a13a" />
        <path d="M5 28q-5-2-2-7 2-3 5-2 3-5 8-3 4 1 4 4 5 0 5 4 0 4-4 4z" fill="#a5bfe9" />
        <path d="M5 25q4 2 18 0" stroke="#cfdef8" stroke-width="3" fill="none" />
        <circle cx="19" cy="8" r="7" fill="#c42b1c" />
        <text x="19" y="12" text-anchor="middle" font-size="11" fill="#fff">2</text>
      </svg>
      <span><b>29°F</b><br />Mostly cloudy</span>
    </button>

    <div class="task-items">
      <button class="task" aria-label="Start">
        <svg viewBox="0 0 24 24"><path d="M1 1h10v10H1zM13 1h10v10H13z" fill="#22a6ee" /><path d="M1 13h10v10H1zM13 13h10v10H13z" fill="#0b7bd8" /></svg>
      </button>
      <label class="search">
        <svg viewBox="0 0 16 16"><circle cx="7" cy="7" r="5" fill="none" stroke="#222" stroke-width="1.500" /><path d="M10.500 10.500 15 15" stroke="#222" stroke-width="1.500" /></svg>
        <input type="text" placeholder="Search" aria-label="Search" />
        <svg class="scene" viewBox="0 0 44 26" aria-hidden="true">
          <path d="M1 21q5-8 11-5 5-9 12-4 6-6 11 2 5 0 7 6l-4 4H4z" fill="#4e8f57" />
          <path d="M14 23q6-9 15-4l6 5z" fill="#78ad51" />
          <path d="M8 6v14M33 9v10" stroke="#8a5527" stroke-width="2" />
          <circle cx="8" cy="6" r="5" fill="#d2a52f" /><circle cx="19" cy="9" r="4" fill="#c5c34b" />
          <path d="M33 1l6 13H27z" fill="#287355" />
          <path d="M18 17l6-5 4 9-8 3z" fill="#4288a1" />
          <circle cx="25" cy="21" r="3" fill="#f2b83c" /><circle cx="39" cy="14" r="2" fill="#ec8045" /><circle cx="5" cy="21" r="2" fill="#f07842" />
          <path d="M39 16v7M11 15l-4 5" stroke="#ec8045" stroke-width="2" />
        </svg>
      </label>
      <button class="task" aria-label="Task view">
        <svg viewBox="0 0 24 24"><path d="M3 7h14v16H3z" fill="#333" /><path d="M8 1h14v14H8z" fill="#fff" opacity=".78" /></svg>
      </button>
      {#each apps as app}
        <button class="task" class:open={app === 'fusion'} class:running={app === 'word'} aria-label={app}>
          <svg viewBox="0 0 24 24">{@html appIcons[app]}</svg>
        </button>
      {/each}
    </div>

    <div class="tray">
      <button aria-label="Hidden icons">{@render glyph('chevronUp')}</button>
      <button aria-label="Cloud sync">{@render glyph('cloud')}</button>
      <button class="status" aria-label="Network, sound and battery">
        {@render glyph('wifi')}
        {@render glyph('speaker')}
        <svg class="battery" viewBox="0 0 20 12"><rect x="1" y="1" width="16" height="10" rx="3" fill="none" stroke="#222" stroke-width="1.300" /><path d="M3 3h9v6H3zM18 4h1v4h-1z" fill="#222" /></svg>
      </button>
      <button class="time">9:04 PM<br />2/28/2026</button>
    </div>
  </div>
</div>

<style>
  :global(body) {
    margin: 0;
  }
  .desktop {
    display: flex;
    flex-direction: column;
    min-height: 100vh;
    background: #fff;
    color: #444;
    font-family: 'Noto Sans', sans-serif;
    font-size: 11px;
  }
  button {
    display: flex;
    align-items: center;
    justify-content: center;
    margin: 0;
    padding: 0;
    border: 0;
    background: none;
    color: inherit;
    font: inherit;
    white-space: nowrap;
  }
  h2 {
    margin: 0;
    font-size: 11px;
    font-weight: 400;
  }
  svg {
    display: block;
    flex: none;
  }
  .glyph {
    width: 16px;
    height: 16px;
  }
  .caret {
    width: 6px;
    height: 4px;
    color: #777;
  }

  /* window chrome */
  .titlebar {
    display: flex;
    align-items: center;
    gap: 5px;
    height: 22px;
    padding-left: 1px;
    background: #eff4f9;
    color: #222;
    font-family: 'Open Sans', sans-serif;
  }
  .app-logo {
    width: 15px;
    height: 15px;
  }
  .window-buttons {
    display: flex;
    margin-left: auto;
  }
  .window-buttons button {
    width: 44px;
    height: 22px;
  }
  .window-buttons svg {
    width: 11px;
    height: 11px;
    fill: none;
    stroke: #222;
  }
  .tabbar {
    display: flex;
    align-items: stretch;
    height: 29px;
    background: #d9d9d9;
  }
  .quick,
  .account {
    display: flex;
    align-items: center;
  }
  .quick {
    gap: 14px;
    padding: 0 20px 0 6px;
  }
  .with-menu {
    gap: 3px;
  }
  .quick .faded {
    margin-right: -4px;
  }
  .quick .faded .caret {
    color: #999;
  }
  .quick .home {
    margin: 4px 0 0 8px;
  }
  .doc-tab {
    display: flex;
    flex: 1;
    align-items: center;
    margin-top: 3px;
    padding: 2px 3px 0 0;
    font-family: 'Liberation Sans', sans-serif;
  }
  .doc-tab.current {
    border-radius: 3px 3px 0 0;
    background: #f5f5f5;
  }
  .doc-name {
    flex: 1;
    gap: 4px;
  }
  .account {
    gap: 15px;
    padding: 0 9px 0 17px;
  }
  .account button:first-child {
    margin-right: 8px;
  }
  .avatar {
    width: 24px;
    height: 24px;
    margin-left: 3px;
    border-radius: 50%;
    background: #fff;
    color: #666;
  }

  /* ribbon */
  .ribbon {
    display: flex;
    gap: 4px;
    height: 80px;
    background: #f5f5f5;
  }
  .workspace {
    gap: 6px;
    width: 103px;
    height: 57px;
    margin: 10px 0 0 11px;
    border: 1px solid #bbb;
    border-radius: 4px;
    box-sizing: border-box;
    color: #333;
    font-weight: 600;
  }
  .ribbon-tabs {
    display: flex;
    height: 23px;
    padding-left: 11px;
    gap: 23px;
  }
  .ribbon-tabs button {
    padding: 0 11px;
    border-bottom: 2px solid transparent;
    color: #555;
  }
  .ribbon-tabs .active {
    border-color: #333;
    color: #333;
    font-weight: 600;
  }
  .groups {
    display: flex;
    padding-top: 2px;
  }
  .group {
    display: flex;
    flex-direction: column;
    align-items: center;
    height: 48px;
    padding: 0 10px 0 9px;
    border-right: 1px solid #ccc;
  }
  .group:last-child {
    border: 0;
  }
  .tools {
    display: flex;
    gap: 8px;
  }
  .tool {
    width: 32px;
    height: 32px;
  }
  .tool .tool-art {
    width: 32px;
    height: 32px;
  }
  .tool.picked {
    width: 38px;
    height: 38px;
    margin: -3px 0;
    border: 1px solid #8fc8e8;
    box-sizing: border-box;
    background: #dcecf5;
  }
  .group-label {
    gap: 3px;
    height: 22px;
    padding: 0 3px;
    color: #555;
  }

  /* viewport */
  .viewport {
    display: flex;
    flex: 1;
    flex-direction: column;
    justify-content: space-between;
    position: relative;
    min-height: 640px;
    box-sizing: border-box;
    padding: 5px 4px;
  }
  .model {
    position: absolute;
    inset: 0;
    width: 100%;
    height: 100%;
  }
  .view-row {
    display: flex;
    align-items: flex-start;
    justify-content: space-between;
    position: relative;
  }
  .view-row.bottom {
    display: grid;
    grid-template-columns: 1fr auto 1fr;
    align-items: center;
  }
  .panel-head {
    display: flex;
    align-items: center;
    width: 280px;
    height: 22px;
    box-sizing: border-box;
    border: 1px solid #ddd;
    background: #f5f5f5;
    color: #555;
  }
  .collapse {
    width: 17px;
    margin-right: 8px;
  }
  .collapse svg {
    width: 8px;
    height: 6px;
  }
  .panel-action {
    margin: 0 10px 0 auto;
  }
  .panel-action svg {
    width: 8px;
    height: 8px;
    stroke: #666;
    stroke-width: 2;
  }
  .comments {
    padding-left: 25px;
  }
  .tree {
    display: flex;
    flex-direction: column;
    justify-content: space-between;
    height: 154px;
    margin: 5px 0 0;
    padding: 0;
    list-style: none;
  }
  .tree li {
    display: flex;
    gap: 7px;
    height: 19px;
    padding-left: 32px;
    color: #555;
  }
  .tree .root {
    padding-left: 15px;
    gap: 8px;
  }
  .twist {
    width: 10px;
  }
  .twist svg {
    width: 8px;
    height: 8px;
    fill: none;
    stroke: #333;
    stroke-width: 1.3;
  }
  .node {
    display: flex;
    align-items: center;
    gap: 8px;
    padding: 0 11px 0 4px;
    background: #f6f6f6;
  }
  .tree .glyph {
    width: 15px;
    height: 15px;
  }
  .node-name {
    padding-left: 5px;
  }
  .root .node {
    gap: 5px;
    padding-right: 5px;
  }
  .selected {
    display: flex;
    align-items: center;
    gap: 13px;
    height: 19px;
    padding: 0 10px 0 3px;
    background: #d9d9d9;
    color: #333;
    font-weight: 600;
  }
  .root input {
    width: 13px;
    height: 13px;
    margin: 0;
    border: 1px solid #777;
    border-radius: 50%;
    appearance: none;
    background: radial-gradient(#444 0 2px, #dde 3px);
  }
  .view-cube {
    width: 64px;
    height: 74px;
    margin: 4px 2px 0 0;
    font-size: 6px;
    fill: #888;
  }
  .axis-z {
    font-size: 9px;
    fill: #7a70ee;
  }
  .axis-x {
    font-size: 9px;
    fill: #f07c7c;
  }
  .navbar {
    display: flex;
    align-items: center;
    gap: 8px;
    height: 23px;
    background: #f5f5f5;
  }
  .navbar .has-menu {
    gap: 4px;
  }
  .navbar .has-menu:not(:first-child) {
    margin-right: -4px;
  }
  .navbar .has-menu:last-child {
    margin-right: 0;
  }
  .assistant {
    justify-self: end;
    margin-right: 7px;
  }
  .assistant svg {
    width: 14px;
    height: 14px;
  }

  /* timeline */
  .timeline {
    display: flex;
    align-items: center;
    height: 46px;
    padding: 0 11px 0 8px;
    border-bottom: 1px solid #a9afb8;
    background: #f4f4f4;
  }
  .playback {
    display: flex;
    gap: 7px;
  }
  .track {
    display: flex;
    width: 507px;
    margin-left: 17px;
  }
  .track ol {
    display: grid;
    grid-template-columns: repeat(22, 1fr);
    width: 495px;
    margin: 0;
    padding: 0;
    list-style: none;
  }
  .track li {
    display: flex;
    flex-direction: column;
    align-items: center;
    padding-top: 6px;
  }
  .track .tool-art {
    width: 17px;
    height: 17px;
  }
  .track li::after {
    content: '';
    width: 100%;
    height: 6px;
    margin-top: 2px;
    background:
      linear-gradient(#aaa, #aaa) center / 1px 100% no-repeat,
      linear-gradient(#aaa, #aaa) bottom / 100% 1px no-repeat;
  }
  .track li:first-child::after {
    width: 50%;
    align-self: flex-end;
    background-position: left, bottom;
  }
  .track li:last-child::after {
    width: 50%;
    align-self: flex-start;
    background-position: right, bottom;
  }
  .marker {
    width: 12px;
    height: 32px;
    margin-left: -6px;
  }
  .timeline-settings {
    margin-left: auto;
  }

  /* taskbar */
  .taskbar {
    display: grid;
    grid-template-columns: 1fr auto 1fr;
    align-items: center;
    height: 44px;
    background: linear-gradient(90deg, #e2ecf7, #dce8f8 22%, #d3dffc 40%, #d5dceb 58%, #dbe0ed 70%, #e1edf7 80%, #e3eef7);
    color: #222;
    font-family: 'Open Sans', sans-serif;
    line-height: 15px;
  }
  .weather {
    justify-self: start;
    gap: 1px;
    padding-left: 16px;
    color: #555;
    text-align: left;
  }
  .weather svg {
    width: 30px;
    height: 30px;
  }
  .weather b {
    color: #222;
    font-weight: 400;
  }
  .task-items {
    display: flex;
    align-items: center;
  }
  .task {
    flex-direction: column;
    position: relative;
    width: 35px;
    height: 36px;
    margin: 0 3px;
    border-radius: 4px;
  }
  .task svg {
    width: 24px;
    height: 24px;
  }
  .task.open {
    background: #eef2fa;
  }
  .task.open::after,
  .task.running::after {
    content: '';
    position: absolute;
    bottom: 0;
    width: 6px;
    height: 3px;
    border-radius: 2px;
    background: #858b96;
  }
  .task.open::after {
    width: 15px;
    background: #5b68a8;
  }
  .search {
    display: flex;
    align-items: center;
    width: 205px;
    height: 28px;
    margin: 0 2px 0 4px;
    padding: 0 3px 0 10px;
    border: 1px solid #cfd7ea;
    border-radius: 14px;
    box-sizing: border-box;
    background: #f3f7fe;
  }
  .search svg {
    width: 15px;
    height: 15px;
  }
  .search .scene {
    width: 44px;
    height: 26px;
  }
  .search input {
    flex: 1;
    min-width: 0;
    padding: 0 0 0 8px;
    border: 0;
    outline: 0;
    background: none;
    font: inherit;
    font-size: 12px;
  }
  .search input::placeholder {
    color: #555;
    opacity: 1;
  }
  .tray {
    display: flex;
    align-items: center;
    justify-self: end;
    gap: 14px;
    padding-right: 18px;
  }
  .status {
    gap: 5px;
  }
  .battery {
    width: 20px;
    height: 12px;
    margin-left: 3px;
  }
  .time {
    display: block;
    text-align: right;
  }
</style>
